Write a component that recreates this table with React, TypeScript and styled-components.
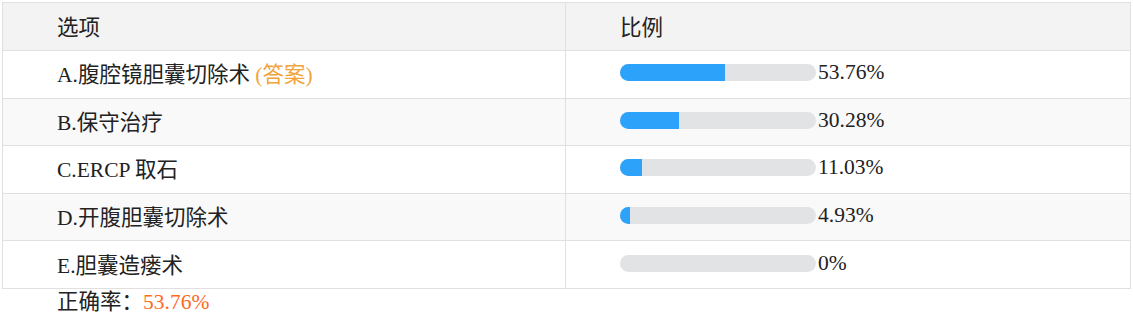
import styled, { createGlobalStyle } from 'styled-components';

const GlobalStyle = createGlobalStyle`
  html, body {
    margin: 0;
    padding: 0;
    background: #fff;
  }
`;

interface Option {
  key: string;
  label: string;
  percent: number;
  answer?: boolean;
}

const options: Option[] = [
  { key: 'A', label: '腹腔镜胆囊切除术', percent: 53.76, answer: true },
  { key: 'B', label: '保守治疗', percent: 30.28 },
  { key: 'C', label: 'ERCP 取石', percent: 11.03 },
  { key: 'D', label: '开腹胆囊切除术', percent: 4.93 },
  { key: 'E', label: '胆囊造瘘术', percent: 0 },
];

const fontStack = `"Liberation Serif", "Noto Sans CJK SC", serif`;

const Page = styled.div`
  padding: 2px 2px 0 2px;
  font-family: ${fontStack};
  font-size: 21.5px;
  color: #222;
`;

const Table = styled.table`
  width: 1129px;
  border-collapse: collapse;
  table-layout: fixed;
  border: 1px solid #e0e0e0;
  font-family: ${fontStack};
  font-size: 21.5px;
  color: #222;
`;

const HeadCell = styled.th<{ $width?: number }>`
  width: ${(p) => (p.$width ? `${p.$width}px` : 'auto')};
  height: 44px;
  padding: 0 0 3px 54px;
  text-align: left;
  font-weight: normal;
  background: #f3f3f3;
  border: 1px solid #e0e0e0;
`;

const Row = styled.tr<{ $striped: boolean }>`
  background: ${(p) => (p.$striped ? '#f9f9f9' : '#fff')};
`;

const Cell = styled.td`
  height: 43.6px;
  padding: 0 0 3px 54px;
  border: 1px solid #e0e0e0;
  white-space: nowrap;
`;

const AnswerTag = styled.span`
  color: #f0a43c;
`;

const Progress = styled.div`
  display: flex;
  align-items: center;
  gap: 2px;
`;

const Track = styled.div`
  width: 196px;
  height: 17px;
  border-radius: 9px;
  background: #e2e3e5;
  overflow: hidden;
`;

const Fill = styled.div`
  height: 100%;
  background: #2ca2fb;
`;

const Footer = styled.div`
  padding-left: 55px;
  line-height: 26px;
`;

const Rate = styled.span`
  color: #ff6a1f;
`;

export default function App() {
  return (
    <Page>
      <GlobalStyle />
      <Table>
        <thead>
          <tr>
            <HeadCell $width={508}>选项</HeadCell>
            <HeadCell>比例</HeadCell>
          </tr>
        </thead>
        <tbody>
          {options.map((o, i) => (
            <Row key={o.key} $striped={i % 2 === 1}>
              <Cell>
                {o.key}.{o.label}
                {o.answer && <AnswerTag> (答案)</AnswerTag>}
              </Cell>
              <Cell>
                <Progress>
                  <Track>
                    <Fill style={{ width: `${o.percent}%` }} />
                  </Track>
                  <span>{o.percent}%</span>
                </Progress>
              </Cell>
            </Row>
          ))}
        </tbody>
      </Table>
      <Footer>
        正确率：<Rate>53.76%</Rate>
      </Footer>
    </Page>
  );
}
